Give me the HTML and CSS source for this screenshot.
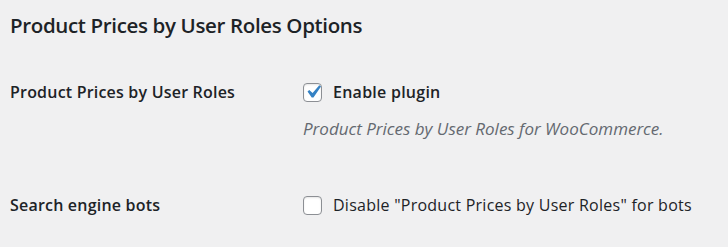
FILE: index.html
```html
<!DOCTYPE html>
<html lang="en">
<head>
<meta charset="utf-8">
<title>Product Prices by User Roles Options</title>
<link rel="stylesheet" href="styles.css">
</head>
<body>
<h2 class="title">Product Prices by User Roles Options</h2>
<div class="form-table">
  <div class="row">
    <div class="row-label">Product Prices by User Roles</div>
    <div class="field">
      <label class="check">
        <span class="box"><svg viewBox="0 0 20 20" width="20" height="20"><path d="M14.83 4.89l1.34.94-5.81 8.38H9.02L5.78 9.67l1.34-1.25 2.57 2.4z" fill="#3582c4"/></svg></span>
        <span class="check-text strong">Enable plugin</span>
      </label>
      <p class="description">Product Prices by User Roles for WooCommerce.</p>
    </div>
  </div>
  <div class="row">
    <div class="row-label">Search engine bots</div>
    <div class="field">
      <label class="check">
        <span class="box"></span>
        <span class="check-text wide">Disable "Product Prices by User Roles" for bots</span>
      </label>
    </div>
  </div>
</div>
</body>
</html>
```
FILE: styles.css
```css
html, body {
  margin: 0;
  background: #f0f0f1;
}
body {
  padding: 0 10px;
  font-family: "Open Sans", "Noto Sans", sans-serif;
  color: #1d2327;
}
.title {
  font-size: 20.5px;
  line-height: 29px;
  font-weight: 600;
  letter-spacing: -0.35px;
  margin: 11px 0 0;
}
.form-table {
  margin-top: 40px;
  display: flex;
  flex-direction: column;
  gap: 52px;
}
.row {
  display: grid;
  grid-template-columns: 293px 1fr;
}
.row-label {
  font-size: 16px;
  line-height: 24px;
  font-weight: 600;
  letter-spacing: 0.2px;
}
.check {
  display: flex;
  align-items: center;
  gap: 11px;
  font-size: 16px;
  line-height: 24px;
}
.box {
  width: 17px;
  height: 17px;
  border: 1px solid #8c8f94;
  border-radius: 4px;
  background: #fff;
  display: flex;
  align-items: center;
  justify-content: center;
  overflow: visible;
  box-shadow: inset 0 1px 2px rgba(0,0,0,.1);
}
.box svg {
  width: 26px;
  height: 26px;
  flex: none;
  margin-top: -1px;
}
.strong {
  font-weight: 600;
  letter-spacing: 0.25px;
}
.wide {
  letter-spacing: 0.25px;
}
.description {
  margin: 13px 0 0;
  font-size: 17px;
  line-height: 24px;
  font-style: italic;
  color: #646970;
}
```
